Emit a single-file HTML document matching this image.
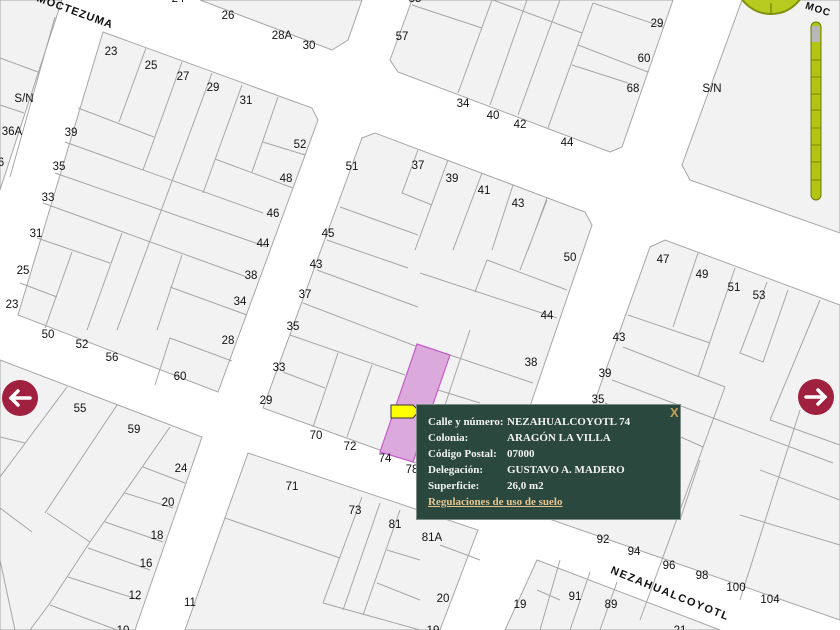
<!DOCTYPE html>
<html><head><meta charset="utf-8"><style>
html,body{margin:0;padding:0;width:840px;height:630px;overflow:hidden;background:#fff}
svg{position:absolute;left:0;top:0}
.l text{font-family:"Liberation Sans",sans-serif;font-size:11.5px;fill:#111;text-anchor:middle;dominant-baseline:central}
#pop{position:absolute;left:416px;top:404px;width:265px;height:116px;background:#2b483f;border:1px solid #7d8c86;box-sizing:border-box;font-family:"Liberation Serif",serif;font-weight:bold;font-size:11px;color:#f2f2f2}
#pop div{position:absolute;left:11px;white-space:nowrap}
#pop span{position:absolute;left:79px}
#x{position:absolute;left:253px;top:0px;color:#c9a050;font-family:"Liberation Sans",sans-serif;font-size:13px}
#pop a{color:#e6c590;text-decoration:underline}
</style></head><body>
<svg width="840" height="630" viewBox="0 0 840 630">
<g fill="#f2f2f2" stroke="#a6a6a6" stroke-width="1">
<polygon points="0,0 62,0 0,190"/>
<polygon points="200,0 332,50 348,40 362,0"/>
<polygon points="412,0 390,60 398,72 610,152 622,147 673,0"/>
<polygon points="742,0 682,165 690,180 840,233 840,0"/>
<polygon points="103,32 312,108 318,120 218,392 18,315"/>
<polygon points="362,138 375,133 585,212 592,225 502,488 413,462 263,408"/>
<polygon points="650,247 665,240 840,305 840,620 552,520"/>
<polygon points="0,360 202,437 135,630 0,630"/>
<polygon points="248,453 478,530 440,630 185,630"/>
<polygon points="537,560 720,630 505,630"/>
</g>
<g stroke="#a6a6a6" stroke-width="1" fill="none">
<path d="M55,17L10,177 M0,58L38,72 M0,105L24,113"/>
<path d="M146,48L119,122 M182,62L143,170 M212,73L117,330 M242,85L203,193 M278,97L252,172 M78,108L154,137 M65,142L263,213 M55,173L267,247 M43,203L247,277 M37,238L110,263 M20,283L57,297 M72,252L45,328 M122,233L87,330 M182,255L157,330 M170,287L247,315 M215,159L293,188 M263,142L305,155 M170,338L155,385 M170,338L232,361"/>
<path d="M412,5L482,28 M492,0L458,93 M527,0L490,105 M560,0L518,115 M593,3L548,128 M493,0L582,33 M593,3L663,27 M578,45L648,72 M572,65L628,83"/>
<path d="M418,150L402,193L432,205 M448,160L415,250 M482,173L453,250 M513,185L492,250 M547,198L528,250 M340,207L418,235 M327,240L408,268 M317,270L418,307 M303,303L418,347 M487,260L567,290 M475,292L487,260 M520,270L547,200 M420,273L557,318 M450,355L533,383 M438,390L480,403 M338,353L313,427 M372,365L347,437 M290,335L405,375 M283,372L325,388 M470,330L440,420"/>
<path d="M698,253L673,327 M735,268L698,377 M767,282L740,353L763,362L788,290 M628,315L710,343 M623,347L725,387 M612,380L713,418L833,463 M605,403L703,447 M725,387L640,620 M800,410L740,600 M820,300L770,420 M770,420L840,445 M760,470L840,500 M740,515L840,545 M680,520L700,460"/>
<path d="M67,387L0,477 M117,405L45,513 M170,427L90,542L50,603L30,630 M143,467L185,483 M125,493L173,508 M105,522L163,542 M88,548L150,570 M68,577L140,600 M50,605L117,630 M0,437L25,443 M47,513L90,542 M0,508L32,532 M0,560L15,630"/>
<path d="M225,518L340,558 M362,497L323,603 M380,503L343,610 M400,510L363,615 M387,550L420,560 M377,583L420,600 M323,603L420,630 M440,545L480,560"/>
<path d="M560,560L540,630 M590,572L570,630 M617,582L600,630 M537,590L560,600"/>
</g>
<polygon points="417,344 450,355 413,462 380,452" fill="#dca9dc" stroke="#c45cc8" stroke-width="1.2"/>
<polygon points="391,405 413,405 419,411 413,418 391,418" fill="#ffff00" stroke="#333" stroke-width="1"/>
<g class="l">
<text x="178" y="-1">24</text><text x="228" y="16">26</text><text x="282" y="36">28A</text><text x="309" y="46">30</text>
<text x="402" y="37">57</text><text x="415" y="-1">35</text><text x="657" y="24">29</text><text x="644" y="59">60</text><text x="633" y="89">68</text>
<text x="463" y="104">34</text><text x="493" y="116">40</text><text x="520" y="125">42</text><text x="567" y="143">44</text>
<text x="712" y="89">S/N</text><text x="24" y="99">S/N</text><text x="12" y="132">36A</text><text x="1" y="163">6</text>
<text x="111" y="52">23</text><text x="151" y="66">25</text><text x="183" y="77">27</text><text x="213" y="88">29</text><text x="246" y="101">31</text>
<text x="300" y="145">52</text><text x="286" y="179">48</text><text x="273" y="214">46</text><text x="263" y="244">44</text><text x="251" y="276">38</text><text x="240" y="302">34</text>
<text x="71" y="133">39</text><text x="59" y="167">35</text><text x="48" y="198">33</text><text x="36" y="234">31</text><text x="23" y="271">25</text><text x="12" y="305">23</text>
<text x="48" y="335">50</text><text x="82" y="345">52</text><text x="112" y="358">56</text><text x="180" y="377">60</text><text x="228" y="341">28</text>
<text x="352" y="167">51</text><text x="418" y="166">37</text><text x="452" y="179">39</text><text x="484" y="191">41</text><text x="518" y="204">43</text>
<text x="570" y="258">50</text><text x="547" y="316">44</text><text x="531" y="363">38</text>
<text x="328" y="234">45</text><text x="316" y="265">43</text><text x="305" y="295">37</text><text x="293" y="327">35</text><text x="279" y="368">33</text><text x="266" y="401">29</text>
<text x="316" y="436">70</text><text x="350" y="447">72</text><text x="385" y="459">74</text><text x="412" y="470">78</text>
<text x="598" y="400">35</text><text x="605" y="374">39</text><text x="619" y="338">43</text>
<text x="663" y="260">47</text><text x="702" y="275">49</text><text x="734" y="288">51</text><text x="759" y="296">53</text>
<text x="603" y="540">92</text><text x="634" y="552">94</text><text x="669" y="566">96</text><text x="702" y="576">98</text><text x="736" y="588">100</text><text x="770" y="600">104</text>
<text x="292" y="487">71</text><text x="355" y="511">73</text><text x="395" y="525">81</text><text x="432" y="538">81A</text>
<text x="443" y="599">20</text><text x="520" y="605">19</text><text x="575" y="597">91</text><text x="611" y="605">89</text>
<text x="190" y="603">11</text><text x="135" y="596">12</text><text x="146" y="564">16</text><text x="157" y="536">18</text><text x="168" y="503">20</text><text x="181" y="469">24</text>
<text x="134" y="430">59</text><text x="80" y="409">55</text><text x="123" y="631">10</text><text x="433" y="631">19</text><text x="680" y="631">21</text>
<text x="0" y="0" transform="translate(75,12) rotate(20)" style="font-weight:bold;font-size:11px;letter-spacing:1px">MOCTEZUMA</text>
<text x="0" y="0" transform="translate(670,594) rotate(22)" style="font-weight:bold;font-size:11px;letter-spacing:1.5px">NEZAHUALCOYOTL</text>
<text x="0" y="0" transform="translate(818,10) rotate(18)" style="font-weight:bold;font-size:10px;letter-spacing:1px">MOC</text>
</g>
<circle cx="20" cy="398" r="18" fill="#a0203f"/>
<path d="M11,398H30 M18,391L11,398L18,405" stroke="#fff" stroke-width="3.5" fill="none" stroke-linecap="round"/>
<circle cx="816" cy="397" r="18" fill="#a0203f"/>
<path d="M806,397H825 M818,390L825,397L818,404" stroke="#fff" stroke-width="3.5" fill="none" stroke-linecap="round"/>
<circle cx="771" cy="-22" r="36" fill="#b7cb1e" stroke="#7f8f10" stroke-width="2"/>
<path d="M771,3V14" stroke="#7f8f10" stroke-width="1.5"/>
<rect x="811" y="22" width="10" height="178" rx="5" fill="#b2c414" stroke="#6c7a08" stroke-width="1"/>
<rect x="812" y="26" width="8" height="16" fill="#b8b8b8"/>
<path d="M811,60H821 M811,77H821 M811,94H821 M811,110H821 M811,128H821 M811,145H821 M811,162H821 M811,180H821" stroke="#6c7a08" stroke-width="0.8"/>
</svg>
<div id="pop">
<div style="top:11px">Calle y número:<span>NEZAHUALCOYOTL 74</span></div>
<div style="top:27px">Colonia:<span>ARAGÓN LA VILLA</span></div>
<div style="top:43px">Código Postal:<span>07000</span></div>
<div style="top:59px">Delegación:<span>GUSTAVO A. MADERO</span></div>
<div style="top:75px">Superficie:<span>26,0 m2</span></div>
<div style="top:91px"><a>Regulaciones de uso de suelo</a></div>
<b id="x">X</b>
</div>
</body></html>
